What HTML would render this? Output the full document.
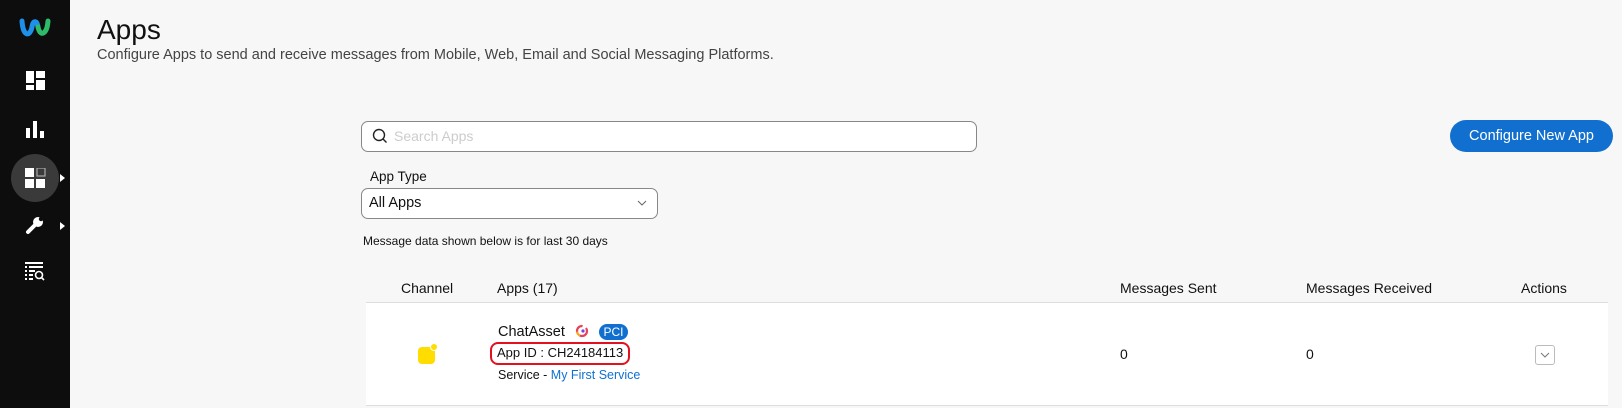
<!DOCTYPE html>
<html><head><style>
body{margin:0;width:1622px;height:408px;background:#f7f7f7;font-family:"Liberation Sans",sans-serif;position:relative;overflow:hidden;color:#111}
.a{position:absolute;white-space:nowrap}
.side{position:absolute;left:0;top:0;width:70px;height:408px;background:#0d0d0d}
</style></head><body>
<div class="side">
 <svg class="a" style="left:19px;top:16px" width="32" height="22" viewBox="0 0 32 22"><path d="M3 5 C4 21 11 21 13 11 C14 4 18 4 19 11" fill="none" stroke="#1e90e8" stroke-width="5" stroke-linecap="round"/><path d="M19 11 C21 21 28 19 29 5" fill="none" stroke="#2dbb6a" stroke-width="5" stroke-linecap="round"/></svg>
 <svg class="a" style="left:26px;top:71px" width="19" height="19"><rect x="0" y="0" width="8" height="12" fill="#fff"/><rect x="10" y="0" width="9" height="7" fill="#fff"/><rect x="10" y="9" width="9" height="10" fill="#fff"/><rect x="0" y="14" width="8" height="5" fill="#fff"/></svg>
 <svg class="a" style="left:25px;top:119px" width="20" height="20"><rect x="1" y="9" width="4" height="10" fill="#fff"/><rect x="8" y="2" width="4" height="17" fill="#fff"/><rect x="15" y="12" width="4" height="7" fill="#fff"/></svg>
 <div class="a" style="left:11px;top:154px;width:48px;height:48px;border-radius:50%;background:#3a3a3a"></div>
 <svg class="a" style="left:25px;top:168px" width="21" height="21"><rect x="0" y="0" width="9" height="9" fill="#fff"/><rect x="12" y="0" width="8" height="8" fill="none" stroke="#aaa" stroke-width="1.2"/><rect x="0" y="11" width="9" height="9" fill="#fff"/><rect x="11" y="11" width="9" height="9" fill="#fff"/></svg>
 <div class="a" style="left:60px;top:174px;border-left:5px solid #fff;border-top:4px solid transparent;border-bottom:4px solid transparent"></div>
 <svg class="a" style="left:25px;top:215px" width="20" height="20"><path d="M3 17 L11 9" stroke="#fff" stroke-width="4" stroke-linecap="round"/><circle cx="13" cy="7" r="5" fill="#fff"/><circle cx="16" cy="4" r="2.2" fill="#0d0d0d"/></svg>
 <div class="a" style="left:60px;top:222px;border-left:5px solid #fff;border-top:4px solid transparent;border-bottom:4px solid transparent"></div>
 <svg class="a" style="left:25px;top:262px" width="20" height="20"><g fill="#fff"><rect x="0" y="0" width="18" height="2"/><rect x="0" y="4" width="2" height="2"/><rect x="4" y="4" width="14" height="2"/><rect x="0" y="8" width="2" height="2"/><rect x="4" y="8" width="6" height="2"/><rect x="0" y="12" width="2" height="2"/><rect x="4" y="12" width="4" height="2"/><rect x="0" y="16" width="2" height="2"/><rect x="4" y="16" width="4" height="2"/></g><circle cx="14" cy="13" r="3.5" fill="none" stroke="#fff" stroke-width="1.6"/><path d="M16.5 15.5 L19 18" stroke="#fff" stroke-width="1.6"/></svg>
</div>
<div class="a" style="left:97px;top:14px;font-size:28px;color:#111">Apps</div>
<div class="a" style="left:97px;top:47px;font-size:14.5px;color:#444">Configure Apps to send and receive messages from Mobile, Web, Email and Social Messaging Platforms.</div>
<div class="a" style="left:361px;top:121px;width:614px;height:29px;border:1px solid #888;border-radius:7px;background:#fff"></div>
<svg class="a" style="left:372px;top:128px" width="16" height="16"><circle cx="7" cy="7" r="5.5" fill="none" stroke="#222" stroke-width="1.4"/><path d="M11 11 L14.5 14.5" stroke="#222" stroke-width="1.4"/></svg>
<div class="a" style="left:394px;top:128px;font-size:14px;color:#ccc">Search Apps</div>
<div class="a" style="left:1450px;top:120px;width:163px;height:32px;border-radius:16px;background:#1170cf;color:#fff;font-size:14.5px;line-height:32px;text-align:center">Configure New App</div>
<div class="a" style="left:370px;top:169px;font-size:13.5px">App Type</div>
<div class="a" style="left:361px;top:188px;width:295px;height:29px;border:1px solid #888;border-radius:7px;background:#fff"></div>
<div class="a" style="left:369px;top:195px;font-size:14.5px">All Apps</div>
<svg class="a" style="left:637px;top:200px" width="10" height="6"><path d="M1 1 L5 5 L9 1" fill="none" stroke="#666" stroke-width="1"/></svg>
<div class="a" style="left:363px;top:234px;font-size:12px">Message data shown below is for last 30 days</div>
<div class="a" style="left:401px;top:280px;font-size:14px">Channel</div>
<div class="a" style="left:497px;top:280px;font-size:14px">Apps (17)</div>
<div class="a" style="left:1120px;top:280px;font-size:14px">Messages Sent</div>
<div class="a" style="left:1306px;top:280px;font-size:14px">Messages Received</div>
<div class="a" style="left:1521px;top:280px;font-size:14px">Actions</div>
<div class="a" style="left:366px;top:302px;width:1242px;height:102px;background:#fff;border-top:1px solid #ddd;border-bottom:1px solid #ddd"></div>
<div class="a" style="left:418px;top:347px;width:17px;height:17px;background:#ffdd00;border-radius:4px"></div>
<div class="a" style="left:430px;top:343px;width:6px;height:6px;border-radius:50%;background:#ffdd00;border:1.5px solid #fff"></div>
<div class="a" style="left:498px;top:324px;font-size:14.5px">ChatAsset</div>
<svg class="a" style="left:575px;top:324px" width="14" height="14"><circle cx="7" cy="7" r="5" fill="none" stroke="#e8405a" stroke-width="2.2" stroke-dasharray="10 4"/><circle cx="7" cy="7" r="5" fill="none" stroke="#f5a623" stroke-width="2.2" stroke-dasharray="5 27" stroke-dashoffset="-10"/><circle cx="8" cy="7" r="1.6" fill="#7b3fe0"/></svg>
<div class="a" style="left:599px;top:324px;width:29px;height:16px;border-radius:8px;background:#1170cf;color:#fff;font-size:12px;line-height:16px;text-align:center">PCI</div>
<div class="a" style="left:490px;top:342px;width:136px;height:19px;border:2.5px solid #e3101f;border-radius:8px"></div>
<div class="a" style="left:497px;top:345px;font-size:13px">App ID : CH24184113</div>
<div class="a" style="left:498px;top:368px;font-size:12.5px">Service - <span style="color:#1170cf">My First Service</span></div>
<div class="a" style="left:1120px;top:346px;font-size:14px">0</div>
<div class="a" style="left:1306px;top:346px;font-size:14px">0</div>
<div class="a" style="left:1535px;top:345px;width:18px;height:18px;border:1px solid #bbb;border-radius:3px;background:#fff"></div>
<svg class="a" style="left:1540px;top:352px" width="10" height="6"><path d="M1 1 L5 5 L9 1" fill="none" stroke="#777" stroke-width="1"/></svg>
</body></html>
